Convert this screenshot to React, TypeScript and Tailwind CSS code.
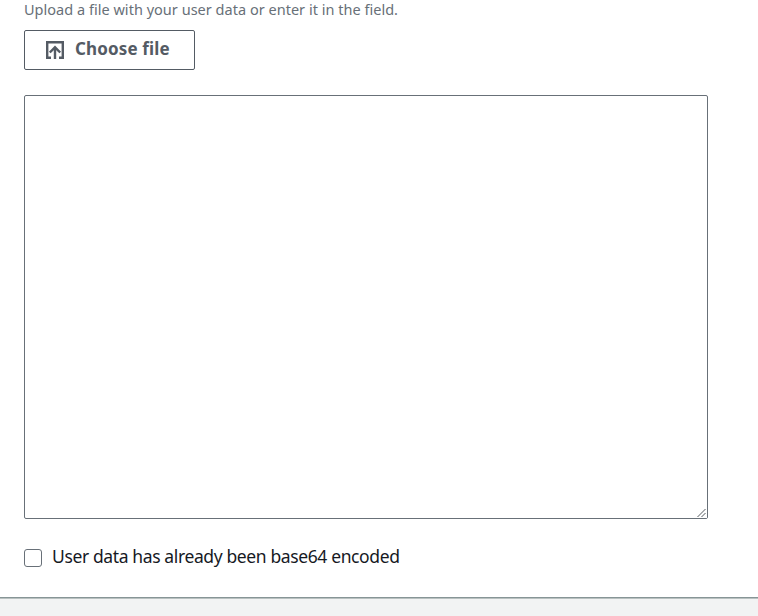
function UploadIcon() {
  return (
    <svg
      className="size-5 shrink-0"
      viewBox="0 0 20 20"
      fill="none"
      stroke="currentColor"
      strokeWidth="2.4"
      aria-hidden="true"
    >
      <path d="M6 17.8H2.2V2.2h15.6v15.6H14" />
      <path d="M10 19V8" />
      <path d="M4.8 12.5L10 7.3l5.2 5.2" />
    </svg>
  );
}

function ResizeGrip() {
  return (
    <svg
      className="pointer-events-none absolute bottom-px right-px size-[11px] bg-white"
      viewBox="0 0 11 11"
      fill="none"
      stroke="#555b60"
      aria-hidden="true"
    >
      <path d="M1.5 10L9.5 2M5.5 10l4-4" />
    </svg>
  );
}

export default function App() {
  return (
    <div className="flex h-screen flex-col overflow-hidden bg-[#f2f3f3] font-['Noto_Sans',sans-serif]">
      <main className="h-[598px] shrink-0 border-b border-[#879596] bg-white px-6">
        <p className="h-[30px] whitespace-nowrap text-[14.5px] leading-[18px] tracking-[0.02px] text-[#687078]">
          Upload a file with your user data or enter it in the field.
        </p>
        <button
          type="button"
          className="flex h-10 w-[171px] items-center rounded-xs border border-[#545b64] bg-white pl-5 text-[#545b64]"
        >
          <UploadIcon />
          <span className="ml-2.5 whitespace-nowrap pb-0.5 text-[17px] font-bold leading-6 tracking-[0.15px]">
            Choose file
          </span>
        </button>
        <div className="relative mt-[25px] h-[424px] w-[684px]">
          <textarea
            aria-label="User data"
            className="block size-full resize-none rounded-xs border border-[#687078] bg-white outline-none"
          />
          <ResizeGrip />
        </div>
        <label className="mt-[26px] flex h-6 items-center">
          <input
            type="checkbox"
            className="mt-0.5 size-[18px] appearance-none rounded-[3px] border border-[#687078] bg-white"
          />
          <span className="ml-2.5 whitespace-nowrap pb-0.5 text-[17.5px] leading-6 tracking-[-0.38px] text-[#16191f]">
            User data has already been base64 encoded
          </span>
        </label>
      </main>
      <div className="h-px shrink-0 bg-[#b9c1c1]" />
    </div>
  );
}
